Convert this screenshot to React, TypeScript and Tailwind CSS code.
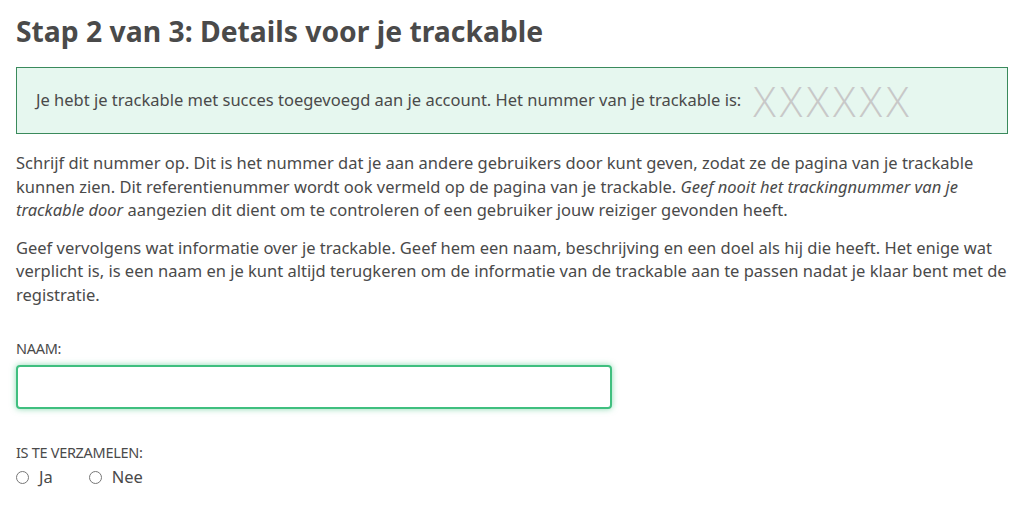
import React from "react";

export default function App() {
  return (
    <div className="w-[1024px] h-[513px] overflow-hidden bg-white text-[#4a4a4a]" style={{ fontFamily: '"Noto Sans", "Open Sans", sans-serif' }}>
      <div className="px-4 pt-[12px]">
        <h1 className="text-[28.3px] font-bold leading-[38px] text-[#4a4a4a]">Stap 2 van 3: Details voor je trackable</h1>
        <div className="mt-[17px] h-[67px] border border-[#3a8a5c] bg-[#e6f7ef] flex items-center pl-[19px] text-[16.5px]">
          <span>Je hebt je trackable met succes toegevoegd aan je account. Het nummer van je trackable is:</span>
          <span className="ml-[12px] text-[42px] text-[#c8c8c8] leading-none tracking-[4px]" style={{ fontFamily: '"Open Sans", sans-serif', fontWeight: 300 }}>XXXXXX</span>
        </div>
        <p className="mt-[17px] text-[16.5px] leading-[23.5px]">
          Schrijf dit nummer op. Dit is het nummer dat je aan andere gebruikers door kunt geven, zodat ze de pagina van je trackable kunnen zien. Dit referentienummer wordt ook vermeld op de pagina van je trackable. <em>Geef nooit het trackingnummer van je trackable door</em> aangezien dit dient om te controleren of een gebruiker jouw reiziger gevonden heeft.
        </p>
        <p className="mt-[14px] text-[16.5px] leading-[23.5px]">
          Geef vervolgens wat informatie over je trackable. Geef hem een naam, beschrijving en een doel als hij die heeft. Het enige wat verplicht is, is een naam en je kunt altijd terugkeren om de informatie van de trackable aan te passen nadat je klaar bent met de registratie.
        </p>
        <div className="mt-[34px] text-[14.5px] leading-[16px] text-[#4a4a4a] tracking-[-0.3px]">NAAM:</div>
        <input className="mt-[9px] block w-[596px] h-[44px] rounded-[4px] border-2 border-[#3fbf7f] bg-white shadow-[0_0_6px_rgba(63,191,127,0.6)] outline-none" />
        <div className="mt-[35px] text-[14.5px] leading-[16px] tracking-[-0.3px]">IS TE VERZAMELEN:</div>
        <div className="mt-[6px] flex items-center text-[16.5px] leading-[22px]">
          <label className="flex items-center">
            <span className="w-[13px] h-[13px] rounded-full border border-[#777] inline-block" />
            <span className="ml-[10px]">Ja</span>
          </label>
          <label className="flex items-center ml-[36px]">
            <span className="w-[13px] h-[13px] rounded-full border border-[#777] inline-block" />
            <span className="ml-[10px]">Nee</span>
          </label>
        </div>
      </div>
    </div>
  );
}
